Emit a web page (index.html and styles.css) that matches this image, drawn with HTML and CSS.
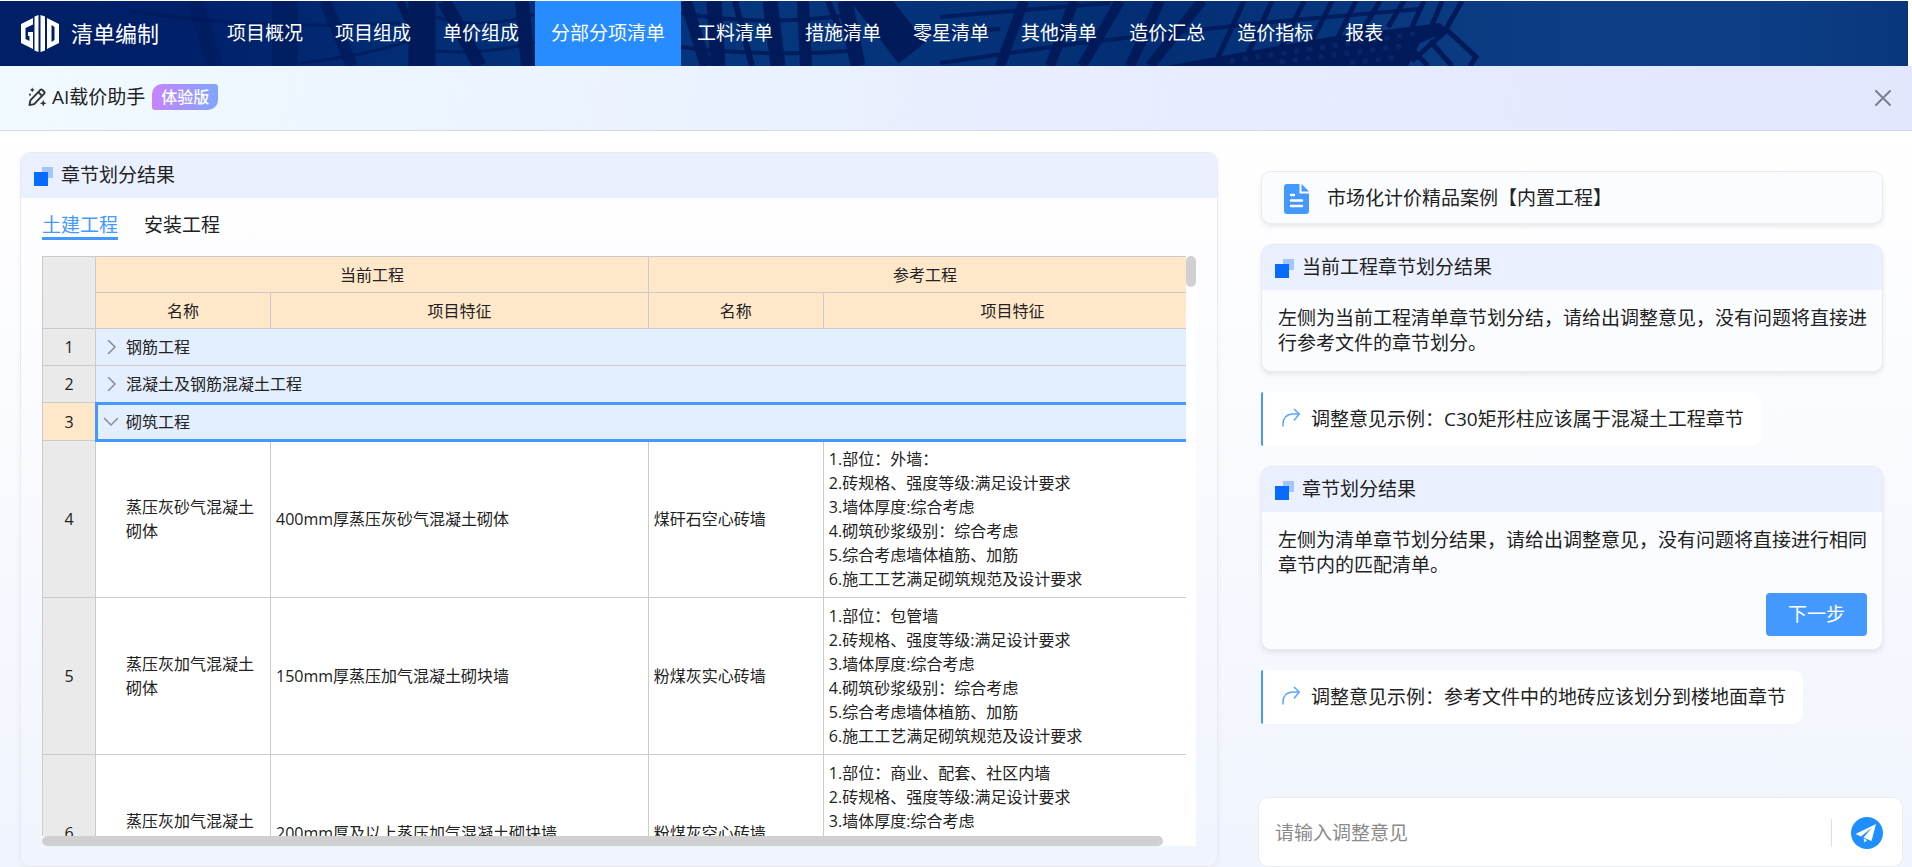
FILE: index.html
```html
<!DOCTYPE html>
<html lang="zh-CN">
<head>
<meta charset="utf-8">
<meta name="viewport" content="width=device-width, initial-scale=1">
<title>清单编制</title>
<link rel="stylesheet" href="styles.css">
</head>
<body>
<header class="topbar">
  <svg class="topbar-art" viewBox="0 0 1908 65" preserveAspectRatio="xMinYMid slice" aria-hidden="true">
    <defs>
      <linearGradient id="sky" x1="0" x2="1" y1="0" y2="0">
        <stop offset="0" stop-color="#001f66"/>
        <stop offset=".1" stop-color="#00206a"/>
        <stop offset=".2" stop-color="#022c74"/>
        <stop offset=".4" stop-color="#06367c"/>
        <stop offset=".6" stop-color="#032e74"/>
        <stop offset=".76" stop-color="#0a3a80"/>
        <stop offset=".82" stop-color="#0d3e85"/>
        <stop offset=".92" stop-color="#0d3e85"/>
        <stop offset="1" stop-color="#09377c"/>
      </linearGradient>
    </defs>
    <rect width="1908" height="65" fill="url(#sky)"/>
    <g fill="none" stroke="#001a5a">
      <path d="M195 0 L215 65" stroke-width="16" opacity=".5"/>
      <path d="M285 0 V65" stroke-width="26" opacity=".6"/>
      <path d="M325 0 L352 65" stroke-width="12" opacity=".8"/>
      <path d="M400 0 L412 28" stroke-width="8"/>
      <path d="M422 0 V65" stroke-width="27"/>
      <path d="M444 0 L480 65 M522 0 L528 65" stroke-width="14"/>
      <path d="M130 10 Q260 30 400 22 M300 62 Q360 56 410 40 M436 16 Q480 30 540 12 M436 50 Q490 54 540 40" stroke-width="3" opacity=".7"/>
      <path d="M686 0 L706 65 M803 0 L806 65" stroke-width="12"/>
      <path d="M714 0 L718 65 M770 0 L778 65 M845 0 L858 65" stroke-width="15"/>
      <path d="M735 0 L752 65 M828 0 L840 30" stroke-width="6"/>
      <path d="M864 -10 L912 52" stroke-width="34"/>
      <path d="M1024 0 L1000 65 M1074 0 L1050 65 M1120 0 L1082 65 M1160 0 L1130 65 M1202 0 L1150 65" stroke-width="10"/>
      <path d="M1244 0 L1214 65 M1272 0 L1242 65 M1304 0 L1272 65 M1332 0 L1312 40 M1356 0 L1338 36 M1380 0 L1362 30 M1404 0 L1388 26 M1424 0 L1412 26 M1442 0 L1432 24" stroke-width="5"/>
      <path d="M680 12 Q760 26 850 14 M680 46 Q760 56 850 50 M940 16 L1110 2 M940 62 L1080 42 L1260 22 L1420 8 M900 34 L1000 28" stroke-width="4" opacity=".85"/>
      <path d="M1462 0 L1446 28 L1476 56 L1470 65 M1430 40 L1452 65 M1410 46 L1428 65 M1446 30 L1412 60" stroke-width="5"/>
    </g>
    <path d="M1166 65 L1250 50 L1330 36 L1440 22 L1448 30 L1420 42 L1408 65 Z" fill="#001a5a"/>
    <g fill="none" stroke="#0a2f70" stroke-width="5" stroke-dasharray="5 8" opacity=".6">
      <path d="M1230 60 L1420 32 M1280 61 L1410 44 M1350 62 L1400 56"/>
    </g>
  </svg>
  <div class="brand">
    <svg class="brand-logo" viewBox="0 0 38 37" aria-hidden="true">
      <path fill="#fff" fill-rule="evenodd" d="M12 3 0 9v19l12 6V17H7v4h1.500v5L4.500 24V13L12 9.500ZM13.500 1.500 17.500 0v37l-4-1.500ZM19.500 0l4.500 1.500v34L19.500 37ZM26 3l12 6v19l-12 6ZM30.500 10v17l3-2V12Z"/>
    </svg>
    <span class="brand-name">清单编制</span>
  </div>
  <nav class="nav">
    <a href="#">项目概况</a>
    <a href="#">项目组成</a>
    <a href="#">单价组成</a>
    <a href="#" class="is-active" aria-current="page">分部分项清单</a>
    <a href="#">工料清单</a>
    <a href="#">措施清单</a>
    <a href="#">零星清单</a>
    <a href="#">其他清单</a>
    <a href="#">造价汇总</a>
    <a href="#">造价指标</a>
    <a href="#">报表</a>
  </nav>
</header>

<div class="assistant-bar">
  <svg class="wand" viewBox="0 0 20 20" aria-hidden="true">
    <g fill="none" stroke="#333" stroke-width="2" stroke-linejoin="round">
      <path d="M1.500 18.500 2.500 13.500 13 2.500 Q14 1.500 15 2.500 L17 4.500 Q18 5.500 17 6.500 L6.500 17.500Z"/>
      <path d="M11 5 15 9"/>
    </g>
    <path fill="#333" d="M16 13l1 2.500 2.500 1-2.500 1-1 2.500-1-2.500-2.500-1 2.500-1ZM4.500 0l.8 1.700 1.700.8-1.700.8-.8 1.700-.8-1.700L2 2.500l1.700-.8ZM1 6.500h2v2H1Z"/>
  </svg>
  <h1 class="assistant-title">AI载价助手</h1>
  <span class="badge">体验版</span>
  <button class="close" type="button" aria-label="关闭">
    <svg viewBox="0 0 16 16"><path d="M1 1 15 15M15 1 1 15" fill="none" stroke="#7b7f90" stroke-width="2" stroke-linecap="round"/></svg>
  </button>
</div>

<main class="layout">
  <section class="panel result-panel">
    <h2 class="panel-head"><span class="mark"></span>章节划分结果</h2>
    <div class="panel-body">
      <div class="tabs">
        <button type="button" class="tab is-active">土建工程</button>
        <button type="button" class="tab">安装工程</button>
      </div>
      <div class="sheet">
        <div class="sheet-view">
          <table class="grid">
            <colgroup><col class="c-no"><col class="c-name"><col class="c-feat"><col class="c-name"><col></colgroup>
            <thead>
              <tr><th rowspan="2" class="no"></th><th colspan="2">当前工程</th><th colspan="2">参考工程</th></tr>
              <tr><th>名称</th><th>项目特征</th><th>名称</th><th>项目特征</th></tr>
            </thead>
            <tbody>
              <tr class="group"><td class="no">1</td><td colspan="4"><button type="button" class="toggle"><svg viewBox="0 0 14 14"><path d="M4 0 11 7 4 14"/></svg>钢筋工程</button></td></tr>
              <tr class="group"><td class="no">2</td><td colspan="4"><button type="button" class="toggle"><svg viewBox="0 0 14 14"><path d="M4 0 11 7 4 14"/></svg>混凝土及钢筋混凝土工程</button></td></tr>
              <tr class="group is-selected"><td class="no">3</td><td colspan="4"><button type="button" class="toggle"><svg viewBox="0 0 14 14"><path d="M0 3 7 10 14 3"/></svg>砌筑工程</button></td></tr>
              <tr><td class="no">4</td><td class="name">蒸压灰砂气混凝土砌体</td><td>400mm厚蒸压灰砂气混凝土砌体</td><td>煤矸石空心砖墙</td><td>1.部位：外墙：<br>2.砖规格、强度等级:满足设计要求<br>3.墙体厚度:综合考虑<br>4.砌筑砂浆级别：综合考虑<br>5.综合考虑墙体植筋、加筋<br>6.施工工艺满足砌筑规范及设计要求</td></tr>
              <tr><td class="no">5</td><td class="name">蒸压灰加气混凝土砌体</td><td>150mm厚蒸压加气混凝土砌块墙</td><td>粉煤灰实心砖墙</td><td>1.部位：包管墙<br>2.砖规格、强度等级:满足设计要求<br>3.墙体厚度:综合考虑<br>4.砌筑砂浆级别：综合考虑<br>5.综合考虑墙体植筋、加筋<br>6.施工工艺满足砌筑规范及设计要求</td></tr>
              <tr><td class="no">6</td><td class="name">蒸压灰加气混凝土砌体</td><td>200mm厚及以上蒸压加气混凝土砌块墙</td><td>粉煤灰空心砖墙</td><td>1.部位：商业、配套、社区内墙<br>2.砖规格、强度等级:满足设计要求<br>3.墙体厚度:综合考虑<br>4.砌筑砂浆级别：综合考虑<br>5.综合考虑墙体植筋、加筋<br>6.施工工艺满足砌筑规范及设计要求</td></tr>
            </tbody>
          </table>
        </div>
        <div class="vbar"><span class="thumb"></span></div>
        <div class="hbar"><span class="thumb"></span></div>
      </div>
    </div>
  </section>

  <aside class="chat">
    <div class="messages">
      <div class="card file-card">
        <svg class="file-icon" viewBox="0 0 25 30" aria-hidden="true">
          <path fill="#4499ff" d="M3 0H15.500V9.500H25V27a3 3 0 0 1-3 3H3a3 3 0 0 1-3-3V3A3 3 0 0 1 3 0ZM17.500 0 25 7.500H17.500Z"/>
          <path d="M7 11h3M7 16.500h11M7 22h11" stroke="#fff" stroke-width="2.400" stroke-linecap="round"/>
        </svg>
        市场化计价精品案例【内置工程】
      </div>
      <section class="card">
        <h2 class="panel-head"><span class="mark"></span>当前工程章节划分结果</h2>
        <p class="card-text">左侧为当前工程清单章节划分结，请给出调整意见，没有问题将直接进行参考文件的章节划分。</p>
      </section>
      <blockquote class="hint">
        <svg viewBox="0 0 18 19" aria-hidden="true"><path d="M1 18.500V16Q1 7 10 6H17M12 1 17.200 6 12 12.500" /></svg>
        调整意见示例：C30矩形柱应该属于混凝土工程章节
      </blockquote>
      <section class="card">
        <h2 class="panel-head"><span class="mark"></span>章节划分结果</h2>
        <p class="card-text">左侧为清单章节划分结果，请给出调整意见，没有问题将直接进行相同章节内的匹配清单。</p>
        <div class="card-actions"><button type="button" class="primary">下一步</button></div>
      </section>
      <blockquote class="hint">
        <svg viewBox="0 0 18 19" aria-hidden="true"><path d="M1 18.500V16Q1 7 10 6H17M12 1 17.200 6 12 12.500" /></svg>
        调整意见示例：参考文件中的地砖应该划分到楼地面章节
      </blockquote>
    </div>
    <form class="composer">
      <input type="text" class="composer-input" placeholder="请输入调整意见" aria-label="调整意见">
      <button type="button" class="send" aria-label="发送">
        <svg viewBox="0 0 32 32" aria-hidden="true">
          <circle cx="16" cy="16" r="16" fill="#1f8fff"/>
          <path fill="#fff" d="M25 7 4.500 17l5.500 2.500L21 10.500 12.500 20.500 20.500 24ZM12.500 21.500 16 23 13.500 25.500Z"/>
        </svg>
      </button>
    </form>
  </aside>
</main>
</body>
</html>
```

FILE: styles.css
```css
* { box-sizing: border-box; }

body {
  margin: 0;
  height: 100vh;
  display: flex;
  flex-direction: column;
  overflow: hidden;
  background: #fff;
  color: #222;
  font: 19px/25px "Open Sans", "Noto Sans CJK SC", sans-serif;
}

h1, h2, p, blockquote { margin: 0; font-size: inherit; font-weight: 400; }
button, input { font: inherit; color: inherit; border: 0; padding: 0; background: none; }
svg { display: block; flex: none; }

/* top navigation */
.topbar {
  position: relative;
  flex: none;
  display: flex;
  height: 65px;
  margin: 1px 4px 0 0;
  background: #001f66;
  color: #fff;
}
.topbar-art { position: absolute; inset: 0; width: 100%; height: 100%; }
.brand, .nav { position: relative; display: flex; align-items: center; }
.brand { width: 211px; padding-left: 21px; gap: 12px; }
.brand-logo { width: 38px; height: 37px; }
.brand-name { font-size: 22px; }
.nav { align-items: stretch; }
.nav a {
  display: flex;
  align-items: center;
  padding: 0 16px;
  color: inherit;
  text-decoration: none;
  white-space: nowrap;
}
.nav .is-active { background: #268cff; }

/* assistant bar */
.assistant-bar {
  flex: none;
  display: flex;
  align-items: center;
  height: 65px;
  padding: 0 21px 2px 28px;
  border-bottom: 1px solid #d3d9e8;
  background: linear-gradient(100deg, #f0faff, #e8eeff 55%, #e2e6ff);
}
.wand { width: 19px; height: 20px; }
.assistant-title { margin-left: 5px; }
.badge {
  margin-left: 7px;
  padding: 0 9px;
  border-radius: 10px 3px;
  background: linear-gradient(90deg, #c683ff, #7ea6ff);
  color: #fff;
  font-size: 16px;
  font-weight: 500;
  line-height: 26px;
}
.close { margin: 2px 0 0 auto; cursor: pointer; }
.close svg { width: 16px; height: 16px; }

/* page layout */
.layout {
  flex: 1;
  min-height: 0;
  display: grid;
  grid-template-columns: minmax(0, 1198fr) minmax(0, 645fr);
  gap: 40px;
  padding: 21px 9px 0 20px;
  background: linear-gradient(#fff, #fbfcff 30%, #f0f4fd);
}

/* cards and panels */
.panel, .card {
  border: 1px solid #e9ebee;
  border-radius: 10px;
  overflow: hidden;
}
.panel-head {
  display: flex;
  align-items: center;
  height: 45px;
  padding: 0 13px;
  background: #eaf0ff;
}
.mark {
  width: 19px;
  height: 19px;
  margin: 2px 8px 0 0;
  background:
    linear-gradient(#086bff, #086bff) 0 100% / 14px 14px no-repeat,
    linear-gradient(#a3c5ff, #a3c5ff) 100% 0 / 11px 11px no-repeat;
}

.result-panel { display: flex; flex-direction: column; box-shadow: 0 2px 6px #0000000c; }
.panel-body {
  flex: 1;
  min-height: 0;
  display: flex;
  flex-direction: column;
  padding: 14px 21px 20px;
}
.tabs { display: flex; gap: 26px; margin-bottom: 16px; }
.tab { height: 28px; line-height: 24px; border-bottom: 3px solid transparent; cursor: pointer; }
.tab.is-active { color: #4499ff; border-color: #4499ff; }

/* bill of quantities grid */
.sheet {
  flex: 1;
  min-height: 0;
  display: grid;
  grid-template: minmax(0, 1fr) 10px / minmax(0, 1fr) 10px;
  background: #fff;
}
.sheet-view { overflow: hidden; }
.grid {
  width: calc(100% + 16px);
  table-layout: fixed;
  border-collapse: separate;
  border-spacing: 0;
  border-top: 1px solid #cbcbcb;
  border-left: 1px solid #cbcbcb;
  font-size: 16px;
  line-height: 24px;
}
.c-no { width: 53px; }
.c-name { width: 15.1%; }
.c-feat { width: 32.6%; }
.grid th, .grid td {
  padding: 6px 5px;
  border-right: 1px solid #cbcbcb;
  border-bottom: 1px solid #cbcbcb;
  text-align: left;
}
.grid th { height: 36px; padding: 0; background: #ffe7ca; font-weight: 400; text-align: center; }
.grid .name { padding-left: 30px; }
.grid .group td { height: 37px; padding-top: 0; padding-bottom: 0; background: #e3efff; }
.grid .no, .grid .group .no { padding: 0; background: #eaeaea; text-align: center; }
.grid .is-selected td { height: 38px; }
.grid .is-selected td + td { outline: 3px solid #4499ff; outline-offset: -2px; }
.grid .group.is-selected .no { background: #ffe7ca; }
.toggle { display: flex; align-items: center; gap: 8px; padding-left: 3px; cursor: pointer; }
.toggle svg { width: 14px; height: 14px; fill: none; stroke: #868b94; stroke-width: 1.5; }

.thumb { display: block; border-radius: 5px; background: #d0d0d0; }
.vbar .thumb { width: 10px; height: 31px; }
.hbar .thumb { width: 98%; height: 10px; }

/* conversation */
.chat { display: flex; flex-direction: column; min-height: 0; }
.messages {
  flex: 1;
  display: flex;
  flex-direction: column;
  align-items: stretch;
  gap: 20px;
  padding: 19px 20px 0 3px;
}
.card { background: #fbfcff; box-shadow: 0 3px 5px #00000014; }
.file-card { display: flex; align-items: center; gap: 18px; height: 53px; padding: 2px 22px 0; }
.file-icon { width: 25px; height: 30px; }
.card-text { padding: 16px 14px 15px 16px; }
.card-actions { display: flex; justify-content: flex-end; padding: 0 15px 13px; }
.primary {
  height: 43px;
  padding: 0 22px;
  border-radius: 4px;
  background: #4499ff;
  color: #fff;
  cursor: pointer;
}
.hint {
  align-self: flex-start;
  display: flex;
  align-items: center;
  gap: 11px;
  height: 54px;
  padding: 0 17px 0 19px;
  border-left: 2px solid #4499ff;
  border-radius: 2px 10px 10px 2px;
  background: #fff;
}
.hint svg { width: 18px; height: 19px; margin-bottom: 4px; fill: none; stroke: #5ba6ff; stroke-width: 1.5; }

.composer {
  flex: none;
  display: flex;
  align-items: center;
  height: 70px;
  padding: 2px 19px 0 16px;
  border: 1px solid #e9ebee;
  border-radius: 10px;
  background: #fff;
}
.composer-input { flex: 1; min-width: 0; height: 40px; outline: 0; }
.composer-input::placeholder { color: #8a8a8a; opacity: 1; }
.send { padding-left: 19px; border-left: 1px solid #dcdfe6; height: 28px; display: flex; align-items: center; cursor: pointer; }
.send svg { width: 32px; height: 32px; }
```
